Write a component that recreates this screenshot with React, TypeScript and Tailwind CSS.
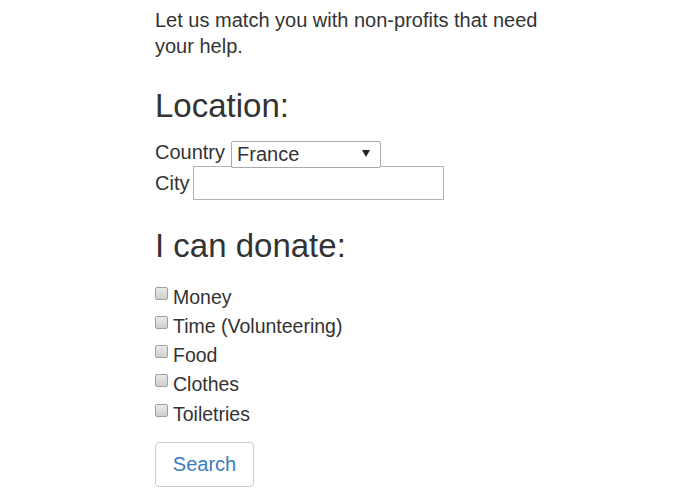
import React from "react";

function Box() {
  return (
    <span className="mt-[4px] mr-[5px] inline-block h-[13px] w-[13px] shrink-0 self-start rounded-[2px] border border-[#a0a0a0] bg-gradient-to-b from-[#eaeaea] to-[#cfcfcf]" />
  );
}

export default function App() {
  const items = ["Money", "Time (Volunteering)", "Food", "Clothes", "Toiletries"];
  return (
    <div className="min-h-[494px] w-[695px] bg-white font-['Liberation_Sans',Arial,sans-serif] text-[#333]">
      <div className="ml-[155px] pt-[7px]">
        <p className="w-[400px] text-[20px] leading-[26px]">
          Let us match you with non-profits that need your help.
        </p>

        <h2 className="mt-[29px] text-[33px] leading-[36.3px] font-normal">Location:</h2>

        <div className="mt-[14.7px] flex h-[27px] items-center text-[20px]">
          <span>Country</span>
          <div className="relative ml-[6px] h-[27px] w-[150px]">
            <select
              defaultValue="France"
              className="h-full w-full appearance-none rounded-[2px] border border-[#a9a9a9] bg-white pl-[5px] text-[20px] leading-[25px] text-[#333] outline-none"
            >
              <option>France</option>
            </select>
            <svg
              className="pointer-events-none absolute right-[11px] top-[11px]"
              width="8"
              height="7"
              viewBox="0 0 8 7"
            >
              <path d="M0 0 H8 L4 7 Z" fill="#222" />
            </svg>
          </div>
        </div>

        <div className="flex h-[34px] items-center text-[20px]">
          <span>City</span>
          <input
            type="text"
            className="ml-[4px] h-[34px] w-[251px] border border-[#b3b3b3] bg-white outline-none"
          />
        </div>

        <h2 className="mt-[28.4px] text-[33px] leading-[36.3px] font-normal">I can donate:</h2>

        <div className="mt-[18px] flex flex-col">
          {items.map((t) => (
            <label key={t} className="flex h-[29.25px] items-center text-[19.5px] leading-[29.25px]">
              <Box />
              <span>{t}</span>
            </label>
          ))}
        </div>

        <button className="mt-[13px] h-[45px] w-[99px] rounded-[4px] border border-[#cccccc] bg-white text-[20px] text-[#3d7cc0]">
          Search
        </button>
      </div>
    </div>
  );
}
